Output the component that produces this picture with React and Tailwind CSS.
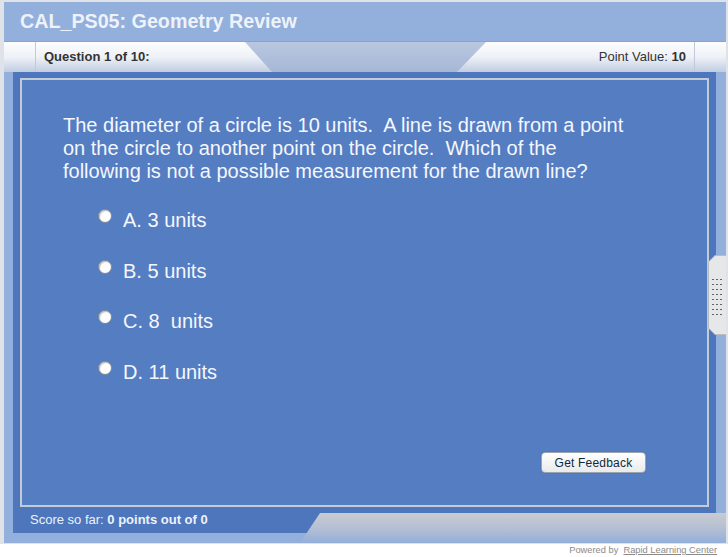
const font = { fontFamily: '"Liberation Sans", Arial, sans-serif' };

const Radio = () => (
  <span className="h-[14px] w-[14px] shrink-0 rounded-full border border-[#7d8796] bg-white shadow-[inset_1px_1px_1px_rgba(0,0,0,0.25)]" />
);

const Option = ({ label }) => (
  <div className="flex items-start gap-[11px]">
    <Radio />
    <span className="whitespace-pre text-[20px] leading-[23px] text-[#f4f7fd]">{label}</span>
  </div>
);

const Grip = () => (
  <div className="absolute right-0 top-[253px] h-[80px] w-[18px] bg-[#b9bcc2] [clip-path:polygon(7px_0,100%_0,100%_100%,7px_100%,0_calc(100%-7px),0_7px)]">
    <div className="ml-[1px] mt-[1px] h-[78px] w-[17px] bg-[#e6e7e9] [clip-path:polygon(6px_0,100%_0,100%_100%,6px_100%,0_calc(100%-6px),0_6px)]">
      <div className="grid w-[12px] grid-cols-3 gap-x-[3px] gap-y-[4px] pl-[3px] pt-[23px]">
        {Array.from({ length: 24 }).map((_, i) => (
          <span key={i} className="h-[1px] w-[2px] bg-[#5f636a]" />
        ))}
      </div>
    </div>
  </div>
);

export default function App() {
  return (
    <div className="h-[557px] w-[728px] overflow-hidden bg-white" style={font}>
      <div className="relative h-[544px] w-[728px] border-b border-l-[4px] border-r-[2px] border-t-[2px] border-[#dfe2e7] bg-[#93afdb]">
        {/* title */}
        <div className="flex h-[39px] items-center pl-[16px] text-[19.7px] font-bold text-[#eef2fa]">
          CAL_PS05: Geometry Review
        </div>

        {/* question header */}
        <div className="flex h-[31px] border-t border-[#8aa3cd] bg-gradient-to-b from-[#b9c7e0] to-[#a6b7d6] text-[13px] text-[#333]">
          <div className="flex w-[268px] bg-gradient-to-b from-[#fdfdfe] via-[#eef1f7] to-[#c2cde1] [clip-path:polygon(0_0,241px_0,268px_100%,0_100%)]">
            <div className="w-[32px] border-r border-[#c2cad8]" />
            <div className="flex items-center pl-[8px] font-bold">Question 1 of 10:</div>
          </div>
          <div className="flex-1" />
          <div className="flex w-[269px] justify-end bg-gradient-to-b from-[#fdfdfe] via-[#eef1f7] to-[#c2cde1] [clip-path:polygon(29px_0,100%_0,100%_100%,0_100%)]">
            <div className="flex items-center pr-[8px]">
              Point Value:&nbsp;<b>10</b>
            </div>
            <div className="w-[32px] border-l border-[#c2cad8]" />
          </div>
        </div>

        {/* body */}
        <div className="pb-[10px] pl-[9px] pr-[10px]">
          <div className="flex h-[461px] flex-col bg-[#4d76bd] px-[7px] pt-[6px]">
            <div className="flex h-[429px] flex-col border-2 border-[#c3cbd6] bg-[#557dc2]">
              <div className="whitespace-pre pl-[41px] pt-[34px] text-[20px] leading-[23px] text-[#f4f7fd]">
                {"The diameter of a circle is 10 units.  A line is drawn from a point\non the circle to another point on the circle.  Which of the\nfollowing is not a possible measurement for the drawn line?"}
              </div>
              <div className="flex flex-col gap-[27.5px] pl-[76px] pt-[26px]">
                <Option label="A. 3 units" />
                <Option label="B. 5 units" />
                <Option label="C. 8  units" />
                <Option label="D. 11 units" />
              </div>
              <div className="flex-1" />
              <div className="flex justify-end pb-[32px] pr-[61px]">
                <button className="h-[21px] w-[105px] rounded-[4px] border border-[#9aa4b0] bg-gradient-to-b from-white to-[#e9eaec] text-[12px] tracking-[0.2px] text-[#0d2a3a] shadow-[0_0_1px_rgba(0,0,0,0.3)]">
                  Get Feedback
                </button>
              </div>
            </div>
            <div className="flex h-[26px] items-center pl-[10px] text-[13px] text-[#eef2fa]">
              Score so far:&nbsp;<b>0 points out of 0</b>
            </div>
          </div>
        </div>

        {/* bottom tab */}
        <div className="absolute bottom-0 right-0 h-[30px] w-[426px] bg-gradient-to-b from-[#c9cbd0] via-[#b5bfd3] to-[#93afdb] [clip-path:polygon(20px_0,100%_0,100%_100%,0_100%)]" />

        <Grip />
      </div>

      <div className="flex justify-end pr-[11px] text-[9.3px] leading-[12px] text-[#8a8a8a]">
        Powered by&nbsp;&nbsp;<span className="underline">Rapid Learning Center</span>
      </div>
    </div>
  );
}
